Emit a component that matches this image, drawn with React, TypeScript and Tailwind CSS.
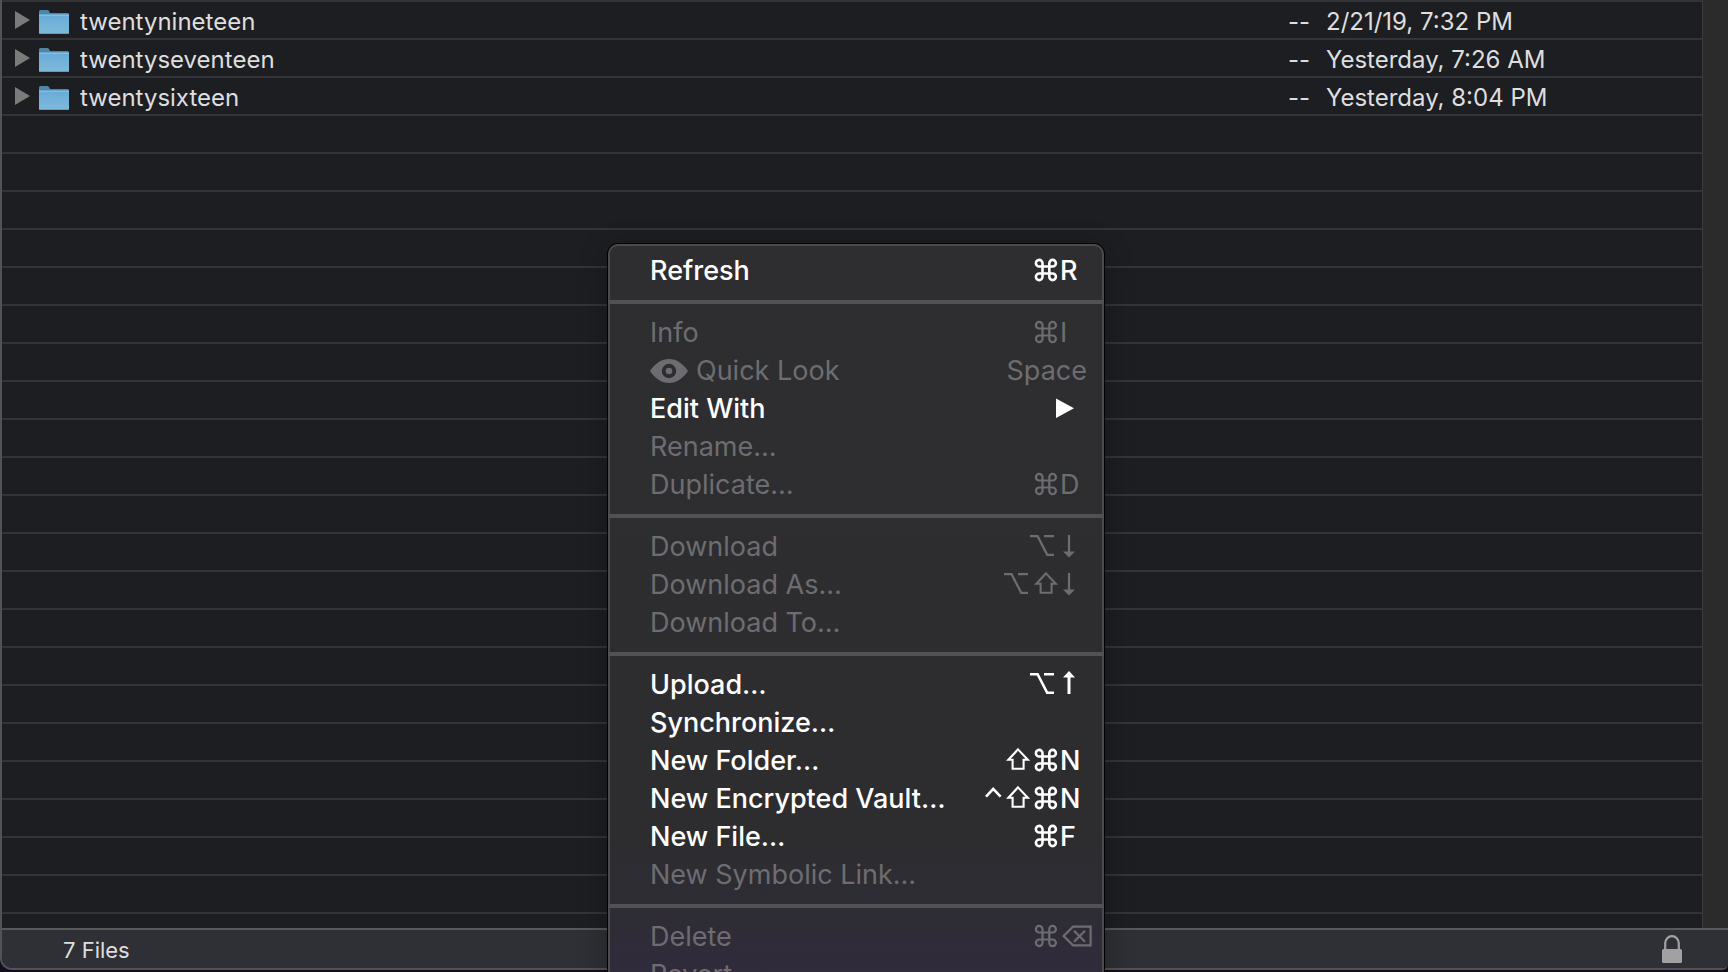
import React from 'react';

type KeyName = 'cmd' | 'opt' | 'shift' | 'ctrl' | 'down' | 'up' | 'backspace';

interface MenuEntry {
  label: string;
  enabled?: boolean;
  mods?: KeyName[];
  letter?: string;
  text?: string;
  icon?: 'eye';
  submenu?: boolean;
}

const files = [
  { name: 'twentynineteen', size: '--', modified: '2/21/19, 7:32 PM' },
  { name: 'twentyseventeen', size: '--', modified: 'Yesterday, 7:26 AM' },
  { name: 'twentysixteen', size: '--', modified: 'Yesterday, 8:04 PM' },
];

const emptyRows = Array.from({ length: 22 }, (_, i) => i);

const menuGroups: MenuEntry[][] = [
  [{ label: 'Refresh', enabled: true, mods: ['cmd'], letter: 'R' }],
  [
    { label: 'Info', mods: ['cmd'], letter: 'I' },
    { label: 'Quick Look', icon: 'eye', text: 'Space' },
    { label: 'Edit With', enabled: true, submenu: true },
    { label: 'Rename…' },
    { label: 'Duplicate…', mods: ['cmd'], letter: 'D' },
  ],
  [
    { label: 'Download', mods: ['opt', 'down'] },
    { label: 'Download As…', mods: ['opt', 'shift', 'down'] },
    { label: 'Download To…' },
  ],
  [
    { label: 'Upload…', enabled: true, mods: ['opt', 'up'] },
    { label: 'Synchronize…', enabled: true },
    { label: 'New Folder…', enabled: true, mods: ['shift', 'cmd'], letter: 'N' },
    { label: 'New Encrypted Vault…', enabled: true, mods: ['ctrl', 'shift', 'cmd'], letter: 'N' },
    { label: 'New File…', enabled: true, mods: ['cmd'], letter: 'F' },
    { label: 'New Symbolic Link…' },
  ],
  [
    { label: 'Delete', mods: ['cmd', 'backspace'] },
    { label: 'Revert' },
  ],
];

const keyWidths: Record<KeyName, number> = {
  cmd: 28,
  opt: 30,
  shift: 26,
  ctrl: 22,
  down: 32,
  up: 32,
  backspace: 32,
};

function KeyGlyph({ name, bold }: { name: KeyName; bold?: boolean }) {
  const width = keyWidths[name];
  return (
    <svg
      width={width}
      height={38}
      viewBox={`0 0 ${width} 38`}
      fill="none"
      stroke="currentColor"
      strokeWidth={bold ? 2.6 : 2.2}
      aria-hidden="true"
    >
      {name === 'cmd' && (
        <path d="M10.5 14.5H7.4A3.3 3.3 0 1 1 10.5 11.2V24.8A3.3 3.3 0 1 1 7.4 21.5H20.6A3.3 3.3 0 1 1 17.3 24.8V11.2A3.3 3.3 0 1 1 20.6 14.5Z" />
      )}
      {name === 'opt' && <path d="M0 8.2H7.6L17.2 26.8H24M14 8.2H24" />}
      {name === 'shift' && <path d="M12 7.4L21.8 17.7H17.6V26.8H6.6V17.7H2.4Z" strokeWidth={2.1} />}
      {name === 'ctrl' && <path d="M2 16.6L9.2 8.8L16.6 16.6" />}
      {name === 'down' && (
        <>
          <path d="M9 7V25" />
          <path d="M3 23.5H15L9 29.5Z" fill="currentColor" stroke="none" />
        </>
      )}
      {name === 'up' && (
        <>
          <path d="M9 10V28" strokeWidth={3} />
          <path d="M3 11.5H15L9 5Z" fill="currentColor" stroke="none" />
        </>
      )}
      {name === 'backspace' && (
        <>
          <path d="M13 8.6H30.6V27.4H13L3.6 18Z" />
          <path d="M14 12.8L25 23.8M25 12.8L14 23.8" />
        </>
      )}
    </svg>
  );
}

function EyeIcon() {
  return (
    <svg width={38} height={38} viewBox="0 0 38 38" className="mr-2" aria-hidden="true">
      <path
        fill="currentColor"
        fillRule="evenodd"
        d="M0 19C5 11.5 11.5 7 19 7S33 11.5 38 19C33 26.5 26.5 31 19 31S5 26.5 0 19ZM19 11.8A7.2 7.2 0 1 0 19 26.2A7.2 7.2 0 1 0 19 11.8Z"
      />
      <circle cx="19" cy="19" r="3.3" fill="currentColor" />
    </svg>
  );
}

function FolderIcon() {
  return (
    <svg width={30} height={24} viewBox="0 0 30 24" aria-hidden="true">
      <defs>
        <linearGradient id="folder-face" x1="0" y1="0" x2="0" y2="1">
          <stop offset="0" stopColor="#68abd8" />
          <stop offset="1" stopColor="#7fb9da" />
        </linearGradient>
      </defs>
      <path d="M0 1.5Q0 0 1.5 0H8.5Q9.8 0 10.3 1.5L11 3H28.5Q30 3 30 4.5V10H0Z" fill="#4f86a6" />
      <path d="M0 4.5H30V22.5Q30 24 28.5 24H1.5Q0 24 0 22.5Z" fill="url(#folder-face)" />
      <path d="M0 5.2H30" stroke="#8fc6e6" strokeWidth="1" />
      <path d="M0.5 23.5H29.5" stroke="#5f9cc0" strokeWidth="1" />
    </svg>
  );
}

function MenuRow({ entry }: { entry: MenuEntry }) {
  const { label, enabled, mods, letter, text, icon, submenu } = entry;
  return (
    <li role="none">
      <button
        type="button"
        role="menuitem"
        disabled={!enabled}
        aria-haspopup={submenu ? 'menu' : undefined}
        className={
          enabled
            ? 'flex h-[38px] w-full items-center justify-between pl-10 pr-[10px] text-left font-medium text-white'
            : 'flex h-[38px] w-full items-center justify-between pl-10 pr-[10px] text-left text-[#6d6d71]'
        }
      >
        <span className="flex items-center whitespace-nowrap">
          {icon && <EyeIcon />}
          {label}
        </span>
        <span className="flex items-center">
          {mods?.map((m) => <KeyGlyph key={m} name={m} bold={enabled} />)}
          {letter && <span className="w-8">{letter}</span>}
          {text && <span className="pr-[5px]">{text}</span>}
          {submenu && (
            <svg width={36} height={38} viewBox="0 0 36 38" aria-hidden="true">
              <path d="M0 8.5L18 18.25L0 28Z" fill="currentColor" />
            </svg>
          )}
        </span>
      </button>
    </li>
  );
}

export default function App() {
  return (
    <div className="relative h-screen overflow-hidden bg-[#120e1e] pb-[2px] font-['Inter','Liberation_Sans',sans-serif]">
      <main className="flex h-full flex-col overflow-hidden rounded-bl-[12px] rounded-br-[6px] border-b-2 border-l-2 border-[#535356] bg-[#1d1e22]">
        <div className="flex min-h-0 flex-1 overflow-hidden">
          <div className="min-w-0 flex-1">
            <table className="w-full table-fixed border-separate border-spacing-0 text-[24px] leading-8 text-[#dededf]">
              <colgroup>
                <col />
                <col className="w-[70px]" />
                <col className="w-[376px]" />
              </colgroup>
              <tbody>
                {files.map((file) => (
                  <tr key={file.name}>
                    <td className="h-[38px] border-t-2 border-[#333438] p-0">
                      <div className="flex items-center pl-[13px]">
                        <button type="button" aria-label={`Expand ${file.name}`} className="mr-[9px]">
                          <svg width={15} height={18} viewBox="0 0 15 18" aria-hidden="true">
                            <path d="M0 0L15 9L0 18Z" fill="#7b7b7c" />
                          </svg>
                        </button>
                        <span className="mr-[11px] pt-1">
                          <FolderIcon />
                        </span>
                        <span className="pt-1">{file.name}</span>
                      </div>
                    </td>
                    <td className="h-[38px] border-t-2 border-[#333438] px-0 pb-0 pt-1 text-right">
                      <span className="pr-4">{file.size}</span>
                    </td>
                    <td className="h-[38px] border-t-2 border-[#333438] px-0 pb-0 pt-1">{file.modified}</td>
                  </tr>
                ))}
                {emptyRows.map((row) => (
                  <tr key={row}>
                    <td colSpan={3} className="h-[38px] border-t-2 border-[#333438] p-0" />
                  </tr>
                ))}
              </tbody>
            </table>
          </div>
          <div className="w-[26px] shrink-0 border-l border-[#3b3b3b] bg-[#2b2b2b]" />
        </div>
        <footer className="flex h-10 shrink-0 items-center justify-between border-t-2 border-[#59595b] bg-[#2f3035] pl-[61px] pr-[46px] text-[22px] text-[#dededf]">
          <span className="pt-[2px] leading-8">7 Files</span>
          <svg width={20} height={28} viewBox="0 0 20 28" role="img" aria-label="Secure connection">
            <path d="M3.2 15V8.5a6.8 7.3 0 0 1 13.6 0V15" fill="none" stroke="#a1a1a4" strokeWidth="2.2" />
            <rect y="14" width="20" height="14" rx="1.5" fill="#a1a1a4" />
          </svg>
        </footer>
      </main>

      <div
        role="menu"
        className="absolute left-[608px] top-[244px] w-[496px] rounded-[10px] border-2 border-[#4b4b4e] bg-[linear-gradient(to_bottom,#2e2e31_0px,#2d2d30_600px,#2f2c36_680px,#312b3e_740px)] pt-[6px] text-[27px] leading-[38px] shadow-[0_0_0_1px_#000000,0_6px_30px_rgba(0,0,0,0.3)]"
      >
        {menuGroups.map((group, i) => (
          <React.Fragment key={group[0].label}>
            {i > 0 && <div role="separator" className="-mx-[2px] my-[10px] h-1 bg-[#525256]" />}
            <ul role="none">
              {group.map((entry) => (
                <MenuRow key={entry.label} entry={entry} />
              ))}
            </ul>
          </React.Fragment>
        ))}
      </div>
    </div>
  );
}
